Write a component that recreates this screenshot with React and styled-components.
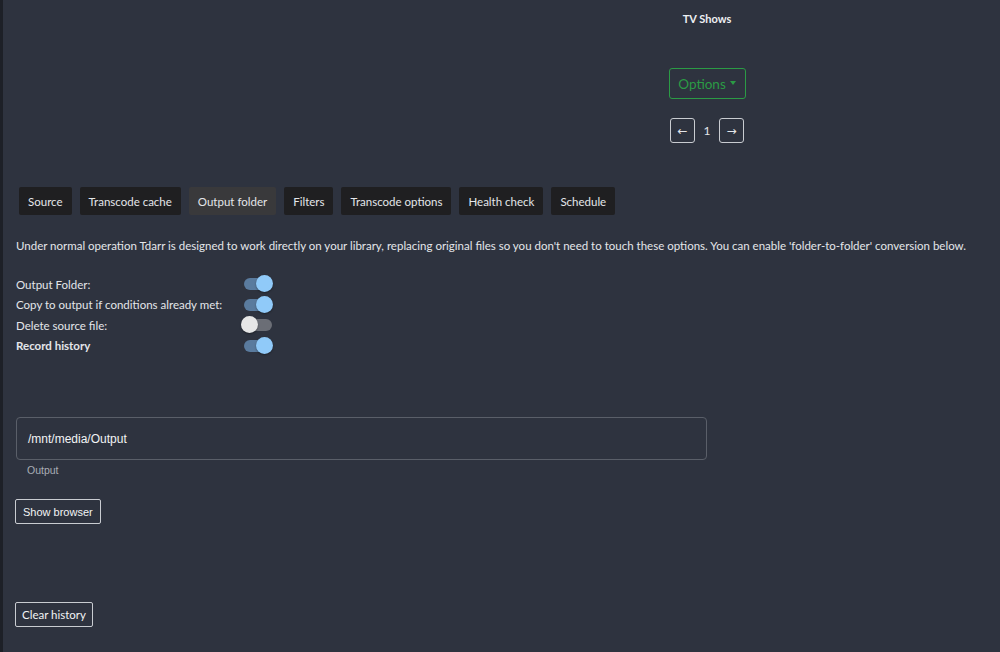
import React, { useState } from "react";
import styled, { createGlobalStyle } from "styled-components";

const COLORS = {
  page: "#2e333f",
  edge: "#1d2027",
  text: "#e4e6ea",
  tab: "#1f1f21",
  tabActive: "#39393b",
  green: "#2b9b45",
  border: "#c9ccd1",
  field: "#5a5f69",
  muted: "#a9adb5",
};

const FONT = `Lato, "Open Sans", sans-serif`;

const GlobalStyle = createGlobalStyle`
  html, body {
    margin: 0;
    padding: 0;
    background: ${COLORS.page};
  }
  body {
    font-family: ${FONT};
    color: ${COLORS.text};
  }
`;

const TABS = [
  "Source",
  "Transcode cache",
  "Output folder",
  "Filters",
  "Transcode options",
  "Health check",
  "Schedule",
];

const SETTINGS = [
  { label: "Output Folder:", on: true },
  { label: "Copy to output if conditions already met:", on: true },
  { label: "Delete source file:", on: false },
  { label: "Record history", on: true, bold: true },
];

const App = () => {
  const [tab, setTab] = useState("Output folder");
  const [settings, setSettings] = useState(SETTINGS);

  const flip = (i) =>
    setSettings((s) => s.map((row, j) => (j === i ? { ...row, on: !row.on } : row)));

  return (
    <Page>
      <GlobalStyle />
      <Header>
        <HeaderColumn>
          <Title>TV Shows</Title>
          <OptionsButton>
            Options <Caret />
          </OptionsButton>
          <Pager>
            <PageButton>←</PageButton>
            <PageNumber>1</PageNumber>
            <PageButton>→</PageButton>
          </Pager>
        </HeaderColumn>
      </Header>

      <Tabs>
        {TABS.map((t) => (
          <Tab key={t} active={t === tab} onClick={() => setTab(t)}>
            {t}
          </Tab>
        ))}
      </Tabs>

      <Description>
        Under normal operation Tdarr is designed to work directly on your library, replacing
        original files so you don't need to touch these options. You can enable
        'folder-to-folder' conversion below.
      </Description>

      <SettingsList>
        {settings.map((row, i) => (
          <SettingRow key={row.label}>
            <SettingLabel bold={row.bold}>{row.label}</SettingLabel>
            <Switch on={row.on} onClick={() => flip(i)}>
              <Track on={row.on} />
              <Thumb on={row.on} />
            </Switch>
          </SettingRow>
        ))}
      </SettingsList>

      <FieldBox>
        <FieldValue>/mnt/media/Output</FieldValue>
      </FieldBox>
      <HelperText>Output</HelperText>

      <OutlineButton>Show browser</OutlineButton>
      <ClearButton>Clear history</ClearButton>
    </Page>
  );
};

const Page = styled.div`
  min-height: 652px;
  box-sizing: border-box;
  border-left: 3px solid ${COLORS.edge};
  padding: 0 0 24px 13px;
`;

// Header
const Header = styled.div`
  display: flex;
  padding-top: 12px;
`;
const HeaderColumn = styled.div`
  display: flex;
  flex-direction: column;
  align-items: center;
  width: 160px;
  margin-left: 611px;
`;
const Title = styled.div`
  font-size: 11px;
  font-weight: 700;
  line-height: 14px;
  color: #eef0f3;
`;
const OptionsButton = styled.button`
  margin-top: 42px;
  height: 31px;
  width: 77px;
  padding: 0;
  background: transparent;
  border: 1px solid ${COLORS.green};
  border-radius: 3px;
  color: ${COLORS.green};
  font-family: ${FONT};
  font-size: 13.5px;
  display: flex;
  align-items: center;
  justify-content: center;
  gap: 4px;
`;
const Caret = styled.span`
  width: 0;
  height: 0;
  border-left: 3px solid transparent;
  border-right: 3px solid transparent;
  border-top: 4px solid ${COLORS.green};
  margin-top: -2px;
`;
const Pager = styled.div`
  margin-top: 19px;
  display: flex;
  align-items: center;
  gap: 7px;
`;
const PageButton = styled.button`
  width: 25px;
  height: 25px;
  padding: 0;
  background: transparent;
  border: 1px solid ${COLORS.border};
  border-radius: 3px;
  color: ${COLORS.text};
  font-family: "DejaVu Sans", sans-serif;
  font-size: 12px;
`;
const PageNumber = styled.span`
  font-size: 12px;
  width: 10px;
  text-align: center;
`;

// Tabs
const Tabs = styled.div`
  display: flex;
  gap: 8px;
  margin: 44px 0 0 3px;
`;
const Tab = styled.button`
  height: 28px;
  padding: 0 9px;
  border: none;
  border-radius: 2px;
  background: ${(p) => (p.active ? COLORS.tabActive : COLORS.tab)};
  color: ${COLORS.text};
  font-family: ${FONT};
  font-size: 11.5px;
  cursor: pointer;
`;

// Folder settings
const Description = styled.p`
  margin: 23px 0 0;
  font-size: 11.5px;
  line-height: 16px;
  white-space: nowrap;
`;
const SettingsList = styled.div`
  margin-top: 20px;
  display: flex;
  flex-direction: column;
`;
const SettingRow = styled.div`
  display: grid;
  grid-template-columns: 225px 40px;
  align-items: center;
  height: 20.5px;
`;
const SettingLabel = styled.span`
  font-size: 11.5px;
  white-space: nowrap;
  font-weight: ${(p) => (p.bold ? 700 : 400)};
`;
const Switch = styled.span`
  position: relative;
  width: 33px;
  height: 18px;
  cursor: pointer;
`;
const Track = styled.span`
  position: absolute;
  left: 3px;
  top: 3px;
  width: 28px;
  height: 12px;
  border-radius: 6px;
  background: ${(p) => (p.on ? "#5a7b9e" : "#6b6e76")};
`;
const Thumb = styled.span`
  position: absolute;
  top: 0;
  left: ${(p) => (p.on ? "15px" : "0")};
  width: 17px;
  height: 17px;
  border-radius: 50%;
  background: ${(p) => (p.on ? "#90caf9" : "#e6e6e6")};
  box-shadow: 0 1px 2px rgba(0, 0, 0, 0.35);
`;

const FieldBox = styled.div`
  margin-top: 61px;
  width: 691px;
  height: 43px;
  box-sizing: border-box;
  border: 1px solid ${COLORS.field};
  border-radius: 4px;
  display: flex;
  align-items: center;
  padding-left: 11px;
`;
const FieldValue = styled.span`
  font-family: "Liberation Sans", Arial, sans-serif;
  font-size: 12px;
  color: #f2f3f5;
`;
const HelperText = styled.div`
  margin: 3px 0 0 11px;
  font-family: "Liberation Sans", Arial, sans-serif;
  font-size: 10.5px;
  line-height: 14px;
  color: ${COLORS.muted};
`;

const OutlineButton = styled.button`
  display: block;
  margin: 22px 0 0 -1px;
  height: 25px;
  padding: 0 7px;
  background: transparent;
  border: 1px solid ${COLORS.border};
  border-radius: 2px;
  color: #f2f3f5;
  font-family: "Liberation Sans", Arial, sans-serif;
  font-size: 11px;
`;
const ClearButton = styled(OutlineButton)`
  margin-top: 78px;
  padding: 0 6px;
  font-family: ${FONT};
  font-size: 11.5px;
`;

export default App;
